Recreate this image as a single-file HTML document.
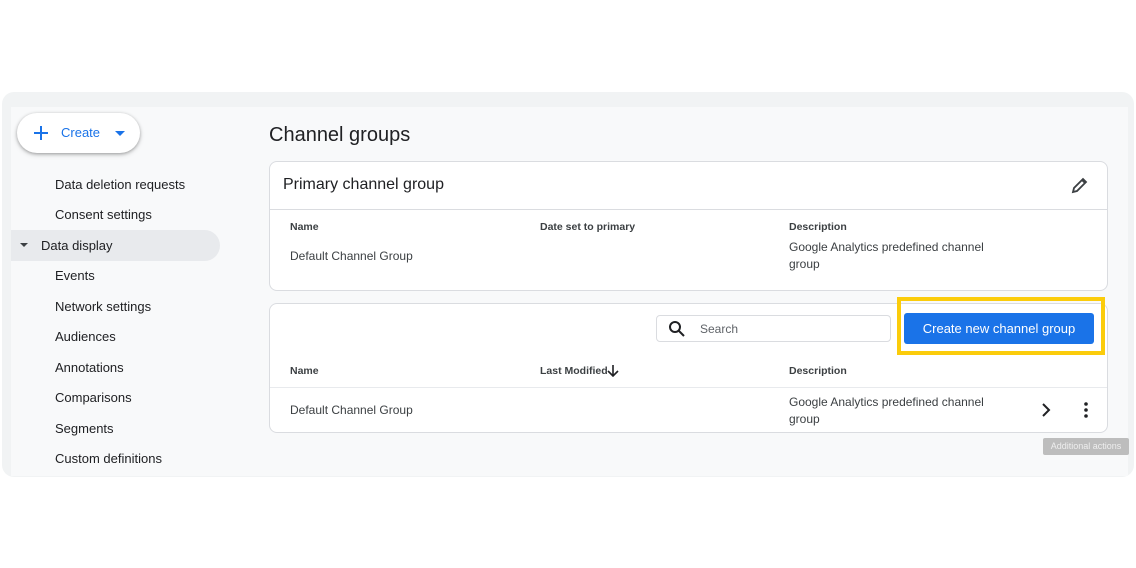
<!DOCTYPE html>
<html><head><style>
*{margin:0;padding:0;box-sizing:border-box}
body{width:1136px;height:568px;background:#fff;font-family:"Liberation Sans",Arial,sans-serif;position:relative;overflow:hidden;color:#202124}
.abs{position:absolute}
.frame{left:2px;top:92px;width:1132px;height:385px;background:#f1f3f4;border-radius:12px}
.inner{left:11px;top:107px;width:1117px;height:369px;background:#f8f9fa}
.create{left:17px;top:113px;width:123px;height:40px;background:#fff;border-radius:20px;box-shadow:0 1px 3px rgba(0,0,0,.3),0 2px 6px rgba(0,0,0,.12)}
.nav{left:55px;font-size:13px;color:#202124}
.sel{left:11px;top:230px;width:209px;height:31px;background:#e8eaed;border-radius:0 16px 16px 0}
.card{background:#fff;border:1px solid #dadce0;border-radius:8px}
.h{font-size:10.5px;font-weight:bold;color:#3c4043}
.t{font-size:12px;color:#3c4043;line-height:17px}
</style></head><body>
<div class="abs frame"></div>
<div class="abs inner"></div>
<div class="abs create">
<svg class="abs" style="left:16px;top:12px" width="16" height="16"><path d="M8 1v14M1 8h14" stroke="#1a73e8" stroke-width="2"/></svg>
<div class="abs" style="left:44px;top:12px;font-size:13px;color:#1a73e8">Create</div>
<svg class="abs" style="left:98px;top:18px" width="10" height="6"><path d="M0 0h10L5 5z" fill="#1a73e8"/></svg>
</div>
<div class="abs nav" style="top:177px">Data deletion requests</div>
<div class="abs nav" style="top:207px">Consent settings</div>
<div class="abs sel"></div>
<svg class="abs" style="left:20px;top:243px" width="8" height="5"><path d="M0 0h8L4 4z" fill="#3c4043"/></svg>
<div class="abs nav" style="left:41px;top:238px">Data display</div>
<div class="abs nav" style="top:268px">Events</div>
<div class="abs nav" style="top:299px">Network settings</div>
<div class="abs nav" style="top:329px">Audiences</div>
<div class="abs nav" style="top:360px">Annotations</div>
<div class="abs nav" style="top:390px">Comparisons</div>
<div class="abs nav" style="top:421px">Segments</div>
<div class="abs nav" style="top:451px">Custom definitions</div>

<div class="abs" style="left:269px;top:124px;font-size:20px;color:#202124">Channel groups</div>

<div class="abs card" style="left:269px;top:161px;width:839px;height:130px"></div>
<div class="abs" style="left:270px;top:209px;width:837px;height:1px;background:#dadce0"></div>
<div class="abs" style="left:283px;top:176px;font-size:16px">Primary channel group</div>
<svg class="abs" style="left:1071px;top:177px" width="17" height="17"><path d="M2 15l1-4L12 2l3 3-9 9z M11 3l3 3" fill="none" stroke="#3c4043" stroke-width="1.8"/></svg>
<div class="abs h" style="left:290px;top:221px">Name</div>
<div class="abs h" style="left:540px;top:221px">Date set to primary</div>
<div class="abs h" style="left:789px;top:221px">Description</div>
<div class="abs t" style="left:290px;top:248px">Default Channel Group</div>
<div class="abs t" style="left:789px;top:239px;width:215px">Google Analytics predefined channel group</div>

<div class="abs card" style="left:269px;top:303px;width:839px;height:130px"></div>
<div class="abs" style="left:656px;top:315px;width:235px;height:27px;background:#fff;border:1px solid #dadce0;border-radius:4px"></div>
<svg class="abs" style="left:668px;top:320px" width="17" height="17"><circle cx="7" cy="7" r="5" fill="none" stroke="#202124" stroke-width="2"/><path d="M11 11l5 5" stroke="#202124" stroke-width="2"/></svg>
<div class="abs" style="left:700px;top:322px;font-size:12px;color:#5f6368">Search</div>
<div class="abs" style="left:897px;top:297px;width:208px;height:58px;border:4px solid #fbcc0b"></div>
<div class="abs" style="left:904px;top:313px;width:190px;height:31px;background:#1a73e8;border-radius:3px;color:#fff;font-size:13px;text-align:center;line-height:31px">Create new channel group</div>
<div class="abs h" style="left:290px;top:365px">Name</div>
<div class="abs h" style="left:540px;top:365px">Last Modified</div>
<svg class="abs" style="left:607px;top:364px" width="12" height="13"><path d="M6 1v10M1 7l5 5 5-5" fill="none" stroke="#202124" stroke-width="1.6"/></svg>
<div class="abs h" style="left:789px;top:365px">Description</div>
<div class="abs" style="left:270px;top:387px;width:837px;height:1px;background:#e8eaed"></div>
<div class="abs t" style="left:290px;top:402px">Default Channel Group</div>
<div class="abs t" style="left:789px;top:394px;width:215px">Google Analytics predefined channel group</div>
<svg class="abs" style="left:1041px;top:403px" width="10" height="14"><path d="M2 1l6 6-6 6" fill="none" stroke="#202124" stroke-width="2"/></svg>
<svg class="abs" style="left:1083px;top:402px" width="6" height="16"><circle cx="3" cy="2" r="1.8" fill="#202124"/><circle cx="3" cy="8" r="1.8" fill="#202124"/><circle cx="3" cy="14" r="1.8" fill="#202124"/></svg>
<div class="abs" style="left:1043px;top:438px;width:86px;height:17px;background:#bdbdbd;border-radius:2px;color:#eee;font-size:9px;text-align:center;line-height:17px">Additional actions</div>
</body></html>
